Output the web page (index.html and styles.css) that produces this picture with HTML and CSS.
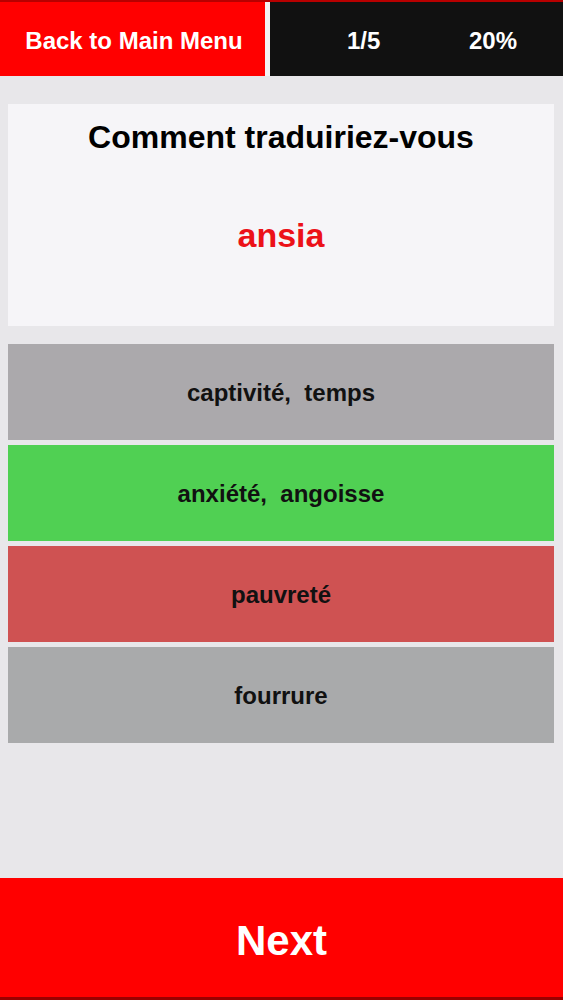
FILE: index.html
```html
<!DOCTYPE html>
<html lang="fr">
<head>
<meta charset="utf-8">
<title>Quiz</title>
<link rel="stylesheet" href="styles.css">
</head>
<body>
<div class="app">
  <header class="topbar">
    <div class="back">Back to Main Menu</div>
    <div class="divider"></div>
    <div class="stats">
      <span class="count">1/5</span>
      <span class="pct">20%</span>
    </div>
  </header>
  <main class="content">
    <section class="question">
      <div class="prompt">Comment traduiriez-vous</div>
      <div class="word">ansia</div>
    </section>
    <div class="options">
      <div class="option neutral">captivité,&nbsp; temps</div>
      <div class="option correct">anxiété,&nbsp; angoisse</div>
      <div class="option wrong">pauvreté</div>
      <div class="option neutral2">fourrure</div>
    </div>
  </main>
  <footer class="next">Next</footer>
</div>
</body>
</html>
```

FILE: styles.css
```css
html, body {
  margin: 0;
  padding: 0;
}
body {
  background: #e8e7ea;
  font-family: "Liberation Sans", Arial, sans-serif;
  font-weight: bold;
}
.app {
  display: flex;
  flex-direction: column;
  height: 1000px;
}
.topbar {
  display: flex;
  height: 76px;
  box-sizing: border-box;
  border-top: 2px solid #b80000;
  background: #f0eff1;
}
.back {
  width: 265px;
  background: #ff0000;
  color: #ffffff;
  font-size: 24px;
  display: flex;
  align-items: center;
  justify-content: center;
  padding-top: 3px;
  padding-left: 3px;
  box-sizing: border-box;
}
.divider {
  width: 5px;
  background: #f4f3f5;
}
.stats {
  flex: 1;
  background: #111111;
  color: #ffffff;
  font-size: 24px;
  display: flex;
  align-items: center;
  justify-content: space-between;
  padding: 3px 46px 0 77px;
}
.content {
  flex: 1;
  padding: 28px 9px 0 8px;
}
.question {
  background: #f6f5f8;
  height: 222px;
  box-sizing: border-box;
  padding-top: 15px;
  text-align: center;
}
.prompt {
  font-size: 32px;
  line-height: 36px;
  color: #000000;
}
.word {
  font-size: 34px;
  line-height: 40px;
  color: #ec1118;
  margin-top: 60px;
}
.options {
  display: flex;
  flex-direction: column;
  gap: 5px;
  margin-top: 18px;
}
.option {
  height: 96px;
  display: flex;
  align-items: center;
  justify-content: center;
  font-size: 24px;
  color: #111111;
  padding-top: 1px;
  box-sizing: border-box;
}
.neutral {
  background: #aba9ac;
}
.correct {
  background: #50d053;
}
.wrong {
  background: #cf5252;
}
.neutral2 {
  background: #a9aaab;
}
.next {
  height: 122px;
  box-sizing: border-box;
  background: #ff0000;
  border-bottom: 3px solid #9a0000;
  color: #ffffff;
  font-size: 42px;
  display: flex;
  align-items: center;
  justify-content: center;
  padding-top: 6px;
}
```
